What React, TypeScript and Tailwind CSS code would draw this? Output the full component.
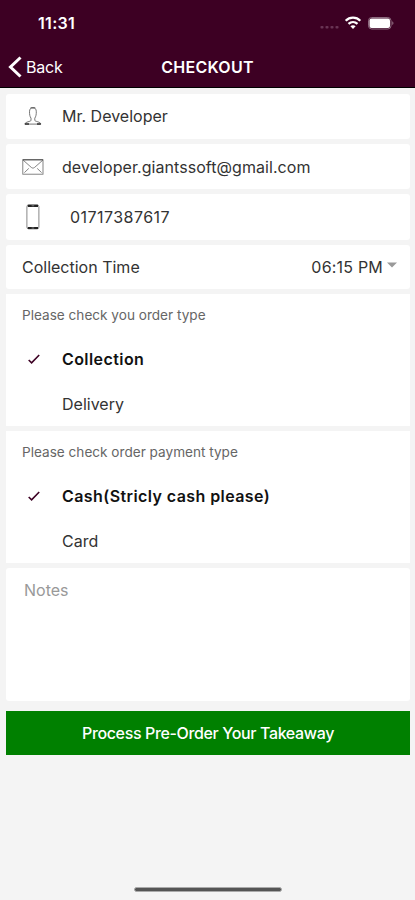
import React, { useState } from 'react';

const UserIcon = () => (
    <svg width="20" height="20" viewBox="0 0 20 20" fill="none" stroke="#666" strokeWidth="0.9">
        <path d="M8 12.2C6.800 10.400 6.500 8.400 6.500 5.800c0-2.900 1.300-4.100 3.400-4.100s3.400 1.200 3.400 4.100c0 2.600-.3 4.600-1.500 6.400v2.200c0 1.200 6 1.300 6 3.700H2c0-2.400 6-2.500 6-3.700z" />
        <path d="M1.800 18h4.200M14 18h3.800" stroke="#333" strokeWidth="1.300" />
        <path d="M7.500 1.900h4.800" stroke="#444" strokeWidth="0.900" />
    </svg>
);

const MailIcon = () => (
    <svg width="22" height="16" viewBox="0 0 22 16" fill="none" stroke="#777" strokeWidth="0.9">
        <rect x="0.8" y="0.8" width="20.200" height="14.400" />
        <path d="M1 1l8.300 7.400c1 .9 2.300.9 3.300 0L21 1M2.400 13.600l4.400-4.200M19.600 13.600l-4.400-4.200" />
        <path d="M0.800 0.800h20.200" stroke="#444" />
    </svg>
);

const PhoneIcon = () => (
    <svg width="14" height="26" viewBox="0 0 14 26" fill="none">
        <rect x="0.900" y="0.900" width="12" height="24" rx="1.800" stroke="#888" strokeWidth="1" />
        <path d="M1.800 1.800h10.200M1.800 24h10.200" stroke="#222" strokeWidth="2.200" />
        <path d="M5.600 1.800h2.600M5.600 24h2.600" stroke="#888" strokeWidth="0.900" />
    </svg>
);

const CheckIcon = () => (
    <svg width="12" height="10" viewBox="0 0 12 10" fill="none" stroke="#3d0023" strokeWidth="1.600">
        <path d="M0.700 6L3.600 8.800L11.200 1" />
    </svg>
);

const StatusIcons = () => (
    <svg width="76" height="16" viewBox="0 0 76 16" fill="none">
        <g fill="#693454">
            <rect x="0.500" y="11" width="3" height="2.500" rx="0.800" />
            <rect x="5.500" y="11" width="3" height="2.500" rx="0.800" />
            <rect x="10.500" y="11" width="3" height="2.500" rx="0.800" />
            <rect x="15.500" y="11" width="3" height="2.500" rx="0.800" />
        </g>
        <g stroke="#fff" strokeWidth="2.300">
            <path d="M25.700 5.700c4-4 10.600-4 14.600 0" />
            <path d="M28.500 8.900c2.600-2.400 6.400-2.400 9 0" />
        </g>
        <path d="M30.400 11.200c1.500-1.200 3.700-1.200 5.200 0L33 14z" fill="#fff" />
        <rect x="48.500" y="2.500" width="22.500" height="11.500" rx="3.200" stroke="#8d6c80" />
        <rect x="49.500" y="3.500" width="20.500" height="9.500" rx="2" fill="#fff" />
        <path d="M72.300 6.300c1.500.6 1.500 3.200 0 3.800z" fill="#9b7a8d" />
    </svg>
);

type OptionProps = {
    label: string;
    selected: boolean;
    onSelect: () => void;
};

const Option = ({ label, selected, onSelect }: OptionProps) => (
    <button onClick={onSelect} className="h-[44.5px] w-full flex items-center text-left">
        <span className="w-[56px] pl-[22px] shrink-0">{selected && <CheckIcon />}</span>
        <span className={selected ? 'font-semibold tracking-[0.42px] text-[#111]' : 'text-[#333]'}>{label}</span>
    </button>
);

export default function App() {
    const [orderType, setOrderType] = useState('collection');
    const [payment, setPayment] = useState('cash');
    const [notes, setNotes] = useState('');

    return (
        <div className="w-[415px] h-[900px] bg-[#f4f4f4] flex flex-col overflow-hidden font-['Inter',sans-serif] text-base text-[#333]">
            {/* Header */}
            <header className="h-[88px] shrink-0 bg-[#3d0023] border-b border-black text-white">
                <div className="h-[46px] flex items-center justify-between pl-[38px] pr-[19px]">
                    <span className="font-semibold tracking-[0.3px]">11:31</span>
                    <StatusIcons />
                </div>
                <div className="h-[41px] grid grid-cols-[1fr_auto_1fr] items-center">
                    <button className="flex items-center gap-[4px] pl-[8px]">
                        <svg width="14" height="22" viewBox="0 0 14 22" fill="none" stroke="#fff" strokeWidth="3">
                            <path d="M12.500 1.500L2.500 11l10 9.500" />
                        </svg>
                        <span className="tracking-[-0.2px]">Back</span>
                    </button>
                    <h1 className="font-semibold tracking-[0.25px]">CHECKOUT</h1>
                </div>
            </header>

            <main className="pl-[6px] pr-[5px] pt-[6px] flex flex-col gap-[5px]">
                {/* Customer */}
                <div className="h-[45px] pb-px bg-white rounded-[3px] flex items-center">
                    <span className="w-[56px] pl-[17px]"><UserIcon /></span>
                    <span>Mr. Developer</span>
                </div>
                <div className="h-[45px] bg-white rounded-[3px] flex items-center">
                    <span className="w-[56px] pl-[16px]"><MailIcon /></span>
                    <span className="tracking-[0.06px]">developer.giantssoft@gmail.com</span>
                </div>
                <div className="h-[46px] bg-white rounded-[3px] flex items-center">
                    <span className="w-[64px] pl-[20px]"><PhoneIcon /></span>
                    <span className="tracking-[0.45px]">01717387617</span>
                </div>
                <div className="h-[44px] bg-white rounded-[3px] flex items-center justify-between pl-[16px] pr-[13px]">
                    <span>Collection Time</span>
                    <span className="flex items-center gap-[4px]">
                        <span className="tracking-[0.2px]">06:15 PM</span>
                        <svg width="10" height="6" viewBox="0 0 10 6" className="mb-[4px]">
                            <path d="M0 .5h10L5 5.500z" fill="#999" />
                        </svg>
                    </span>
                </div>

                {/* Order type */}
                <section className="h-[132px] bg-white">
                    <p className="h-[43px] flex items-center pl-[16px] text-[13.6px] text-[#666]">Please check you order type</p>
                    <Option label="Collection" selected={orderType === 'collection'} onSelect={() => setOrderType('collection')} />
                    <Option label="Delivery" selected={orderType === 'delivery'} onSelect={() => setOrderType('delivery')} />
                </section>

                {/* Payment type */}
                <section className="h-[132px] bg-white">
                    <p className="h-[43px] flex items-center pl-[16px] text-[13.6px] text-[#666]">Please check order payment type</p>
                    <Option label="Cash(Stricly cash please)" selected={payment === 'cash'} onSelect={() => setPayment('cash')} />
                    <Option label="Card" selected={payment === 'card'} onSelect={() => setPayment('card')} />
                </section>

                <textarea
                    value={notes}
                    onChange={(e) => setNotes(e.target.value)}
                    placeholder="Notes"
                    className="block h-[133px] bg-white rounded-[3px] resize-none outline-none pl-[18px] pt-[10px] placeholder:text-[#999]"
                />

                <button className="h-[44px] mt-[5px] bg-[#008000] text-white font-medium tracking-[-0.36px]">
                    Process Pre-Order Your Takeaway
                </button>
            </main>

            {/* Home indicator */}
            <div className="mt-auto mb-[8px] self-center w-[148px] h-[5px] rounded-full bg-[#555] border border-[#aaa]"></div>
        </div>
    );
}
